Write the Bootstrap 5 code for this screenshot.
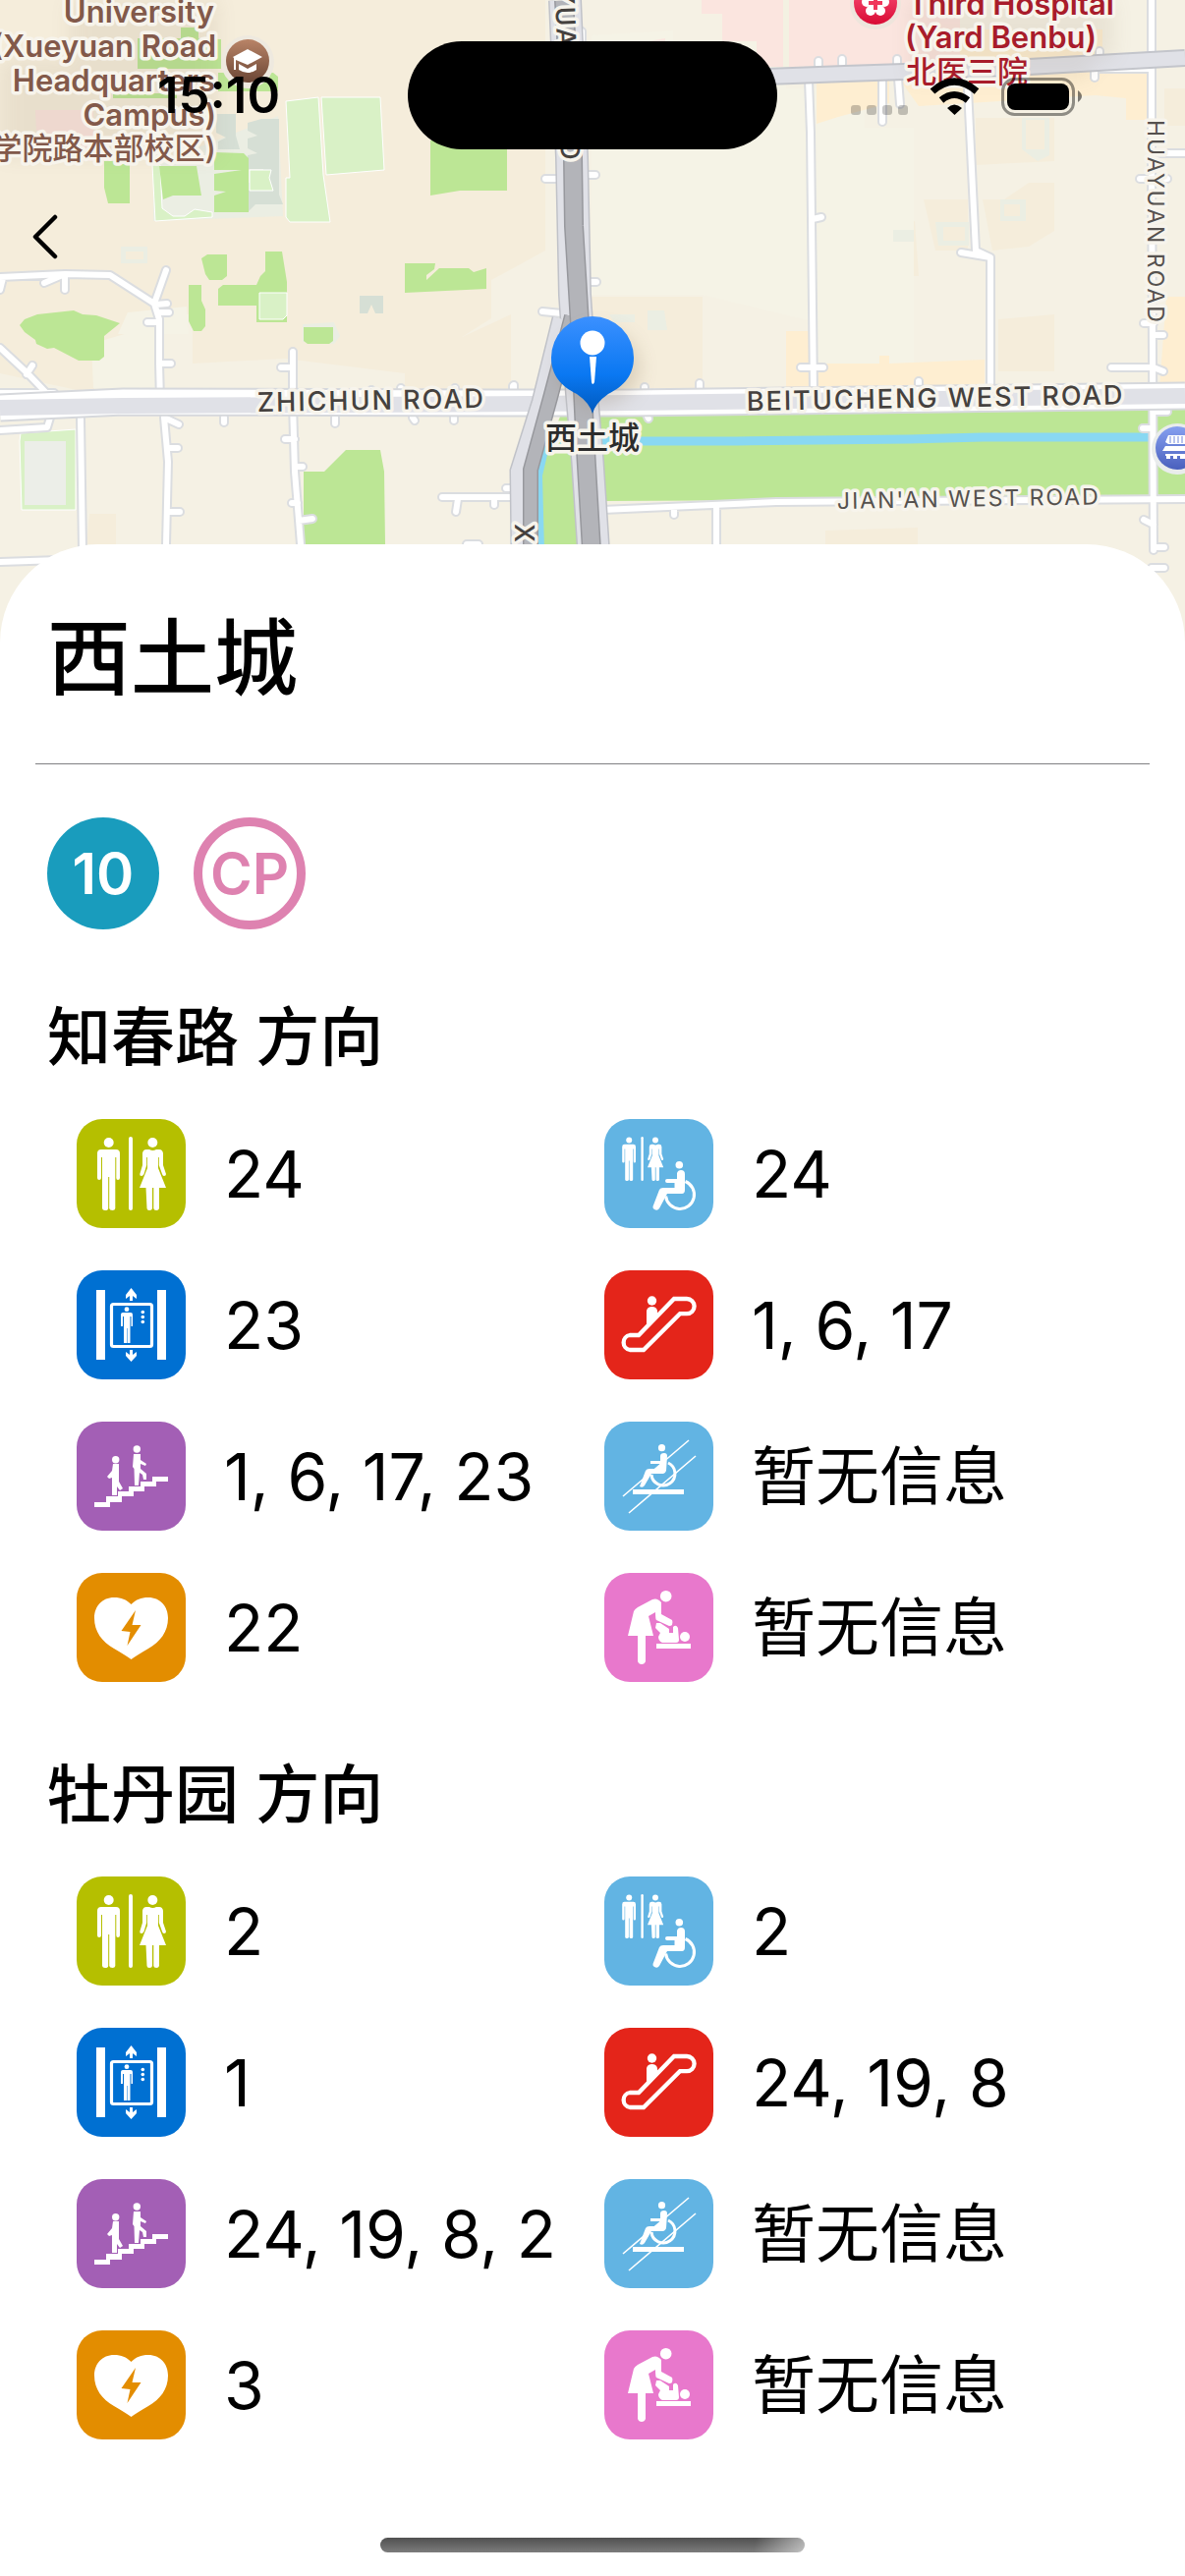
<!DOCTYPE html>
<html lang="zh-CN">
<head>
<meta charset="utf-8">
<meta name="viewport" content="width=device-width, initial-scale=1">
<title>西土城</title>
<link href="https://cdn.jsdelivr.net/npm/bootstrap@5.3.0/dist/css/bootstrap.min.css" rel="stylesheet">
<style>
  body { font-family: Inter, "Noto Sans CJK SC", sans-serif; color: #000; background: #fff; }
  .map-area { height: 690px; background: #f5f1e4; overflow: hidden; }
  .map-area svg { display: block; width: 100%; height: 690px; }
  .status-bar { height: 194px; z-index: 3; }
  .clock { font-size: 51px; font-weight: 600; line-height: 60px; }
  .clock time { margin-left: 30px; }
  .indicators { margin-right: 32px; }
  .island { width: 376px; height: 110px; border-radius: 55px; background: #000; }
  .back-btn { top: 194px; left: 0; width: 92px; height: 94px; z-index: 3; }
  .sheet { margin-top: -136px; border-radius: 100px 100px 0 0; background: #fff; padding: 57px 36px 24px; z-index: 2; }
  .station { font-size: 85px; font-weight: 500; line-height: 120px; padding-left: 12px; margin: 0 0 46px; }
  .rule { height: 1px; background: #808083; margin: 0 0 54px; }
  .lines { gap: 35px; padding-left: 12px; margin-bottom: 65px; }
  .line-dot { width: 114px; height: 114px; font-size: 58px; font-weight: 600; line-height: 1; }
  .line-10 { background: #199cbd; color: #fff; }
  .line-cp { border: 9px solid #de82b0; color: #de82b0; }
  .direction { font-size: 65px; font-weight: 500; line-height: 90px; padding-left: 12px; margin: 0 0 38px; }
  .facilities { padding: 0 42px; margin-bottom: 70px; }
  .facilities .row { --bs-gutter-y: 43px; }
  .facility { gap: 39px; height: 111px; font-size: 66px; line-height: 100px; white-space: nowrap; }
  .facility .none { font-size: 65px; }
  .tile { width: 111px; height: 111px; border-radius: 26px; flex: none; fill: #fff; }
  .tile-wc { background: #b5bf00; }
  .tile-lift { background: #0070d2; }
  .tile-stairs { background: #a35fb5; }
  .tile-aed { background: #e38d00; }
  .tile-access { background: #62b4e3; }
  .tile-escalator { background: #e4251a; }
  .tile-baby { background: #e878cc; }
  .home-bar { width: 432px; height: 15px; border-radius: 8px; background: linear-gradient(100deg, transparent 88%, #ffffff88), linear-gradient(#505050, #7c7c7c); margin-top: 100px; }
  .park { fill: #bce695; }
  .field { fill: #d9f1c6; stroke: #fff; stroke-width: 1; }
  .block { fill: #f5eddb; }
  .sand { fill: #feeed1; }
  .clinic { fill: #fbe5df; }
  .bldg { fill: #d6dfd5; }
  .pale { fill: #ebeee3; }
  .street-edge { fill: none; stroke: #dbdde0; stroke-width: 10; stroke-linecap: round; stroke-linejoin: round; }
  .street { fill: none; stroke: #fff; stroke-width: 6; stroke-linecap: round; stroke-linejoin: round; }
  .map-text { paint-order: stroke; stroke: #f7f4ec; stroke-width: 7px; stroke-linejoin: round; font-family: Inter, "Noto Sans CJK SC", sans-serif; }
  .poi { font-size: 31px; font-weight: 600; }
  .poi .zh { font-weight: 500; }
  .school { fill: #82594a; text-anchor: end; }
  .hospital { fill: #a81c2b; }
  .road-name { font-size: 27px; font-weight: 500; fill: #45413e; letter-spacing: 2px; }
  .road-minor { font-size: 23px; font-weight: 400; fill: #55514e; letter-spacing: 2px; }
  .pin-name { font-size: 32px; font-weight: 500; fill: #2c2c2c; text-anchor: middle; }
</style>
</head>
<body>
<svg width="0" height="0" class="position-absolute" aria-hidden="true">
  <defs>
    <g id="pair">
      <circle cx="32.700" cy="24" r="5"/>
      <path d="M25 31H40Q44 31 44 35V60Q44 62 42 62Q40.300 62 40.300 60V39H39.300V91Q39 93 36.500 93Q33.500 93 33.200 91V59H32.200V91Q32 93 29 93Q26.300 93 26 91V39H25V60Q25 62 23 62Q21 62 21 60V35Q21 31 25 31Z"/>
      <rect x="53" y="18" width="4" height="75" rx="2"/>
      <circle cx="77.300" cy="24" r="5"/>
      <path d="M71 31H74Q77.500 33 81 31H84Q87.500 31 88 35V47L91 56Q91 58 89 58Q87.500 58 87 56L83.800 47V39H83V50L91 70H84V91Q83.500 93 81.200 93Q78.500 93 78.300 91V70H77V91Q76.800 93 74 93Q71.700 93 71.500 91L70.500 70H64L72 50V39H71.200V47L68.500 56Q67.500 58 66 58Q64 58 64.300 56L67 47V35Q67.500 31 71 31Z"/>
    </g>
    <symbol id="i-wc" viewBox="0 0 111 111"><use href="#pair"/></symbol>
    <symbol id="i-access" viewBox="0 0 111 111">
      <use href="#pair" transform="translate(5.600 7.200) scale(.6)"/>
      <circle cx="76.300" cy="46.700" r="3.800"/>
      <path d="M74 55Q75 52 78 52Q82 52 82 56V72Q82 76 79 76H64L56 91Q54 94 51 92Q49 91 49.500 89L56 72Q57 70 60 70H71.500V65H64Q62 65 62 63Q62 61 64 61H74Z"/>
      <path d="M82.500 63.500A14.500 14.500 0 1 1 62.600 78.500" fill="none" stroke="#fff" stroke-width="3"/>
    </symbol>
    <symbol id="i-lift" viewBox="0 0 111 111">
      <path d="M20 20h9v71h-9zM82 20h9v71h-9z"/>
      <rect x="35.500" y="34.500" width="41" height="43" rx="2" fill="none" stroke="#fff" stroke-width="3.200"/>
      <circle cx="51" cy="39.700" r="2.400"/>
      <path d="M47 43H55Q57 43 57 45V57H55.500V47H54.500V74H51.500V59H51V74H48V47H47V57H45V45Q45 43 47 43Z"/>
      <circle cx="67.300" cy="42.500" r="1.800"/><circle cx="67.300" cy="47.500" r="1.800"/><circle cx="67.300" cy="52.500" r="1.800"/>
      <path d="M55.500 18L61 25V29L57 26V31H54V26L50 29V25ZM55.500 93L61 87V83L57 86V81H54V86L50 83V87Z"/>
    </symbol>
    <symbol id="i-escalator" viewBox="0 0 111 111">
      <circle cx="48.500" cy="31" r="4.700"/>
      <path d="M43 41Q44 37 48.500 37Q53 37 54 41V45L43 56Z"/>
      <path d="M71 29H84A7.600 7.600 0 0 1 84 44.200H77L40 81H26A7.600 7.600 0 0 1 26 66H35Z" fill="none" stroke="#fff" stroke-width="4.300"/>
    </symbol>
    <symbol id="i-stairs" viewBox="0 0 111 111">
      <path d="M18 82h16v5h-16zM30 76h16v6h-16zM42 71h16v5h-16zM53 66h16v5h-16zM65 61h16v5h-16zM77 56h16v5h-16z"/>
      <circle cx="39.700" cy="38.700" r="3.700"/>
      <path d="M37 43H43V61L47 68L44 70L41 66V75H36V57L33 58L31 56L36 50Z"/>
      <circle cx="61.300" cy="28" r="3.700"/>
      <path d="M58 33H65V39L71 43L70 45L65 43V48L71 53V59H68L67 54L64 52L63 65H59L58.500 48L57 46Z"/>
    </symbol>
    <symbol id="i-platform" viewBox="0 0 111 111">
      <circle cx="58.500" cy="26.700" r="3.600"/>
      <path d="M57 35Q57 32 61 32Q64 32 64 35L63 50Q62 53 60 53H48L41 65Q39 68 36 66L42 50Q43 48 46 48H52L57 43H47V40H57Z"/>
      <path d="M65 42A12 12 0 1 1 48 54" fill="none" stroke="#fff" stroke-width="3"/>
      <path d="M29 69h52v5h-52z"/>
      <path d="M19 76L86 19M25 93L93 35" stroke="#fff" stroke-width="1.600"/>
    </symbol>
    <symbol id="i-aed" viewBox="0 0 111 111">
      <path fill-rule="evenodd" d="M55.500 32C50 27 46 25 38 25C26 25 18 34 18 46C18 60 26 70 38 77Q50 84 55.500 88Q61 84 73 77C85 70 93 60 93 46C93 34 85 25 73 25C65 25 61 27 55.500 32ZM60 38L45.500 59L54.500 60L51.500 74L65.500 53H56.500Z"/>
    </symbol>
    <symbol id="i-baby" viewBox="0 0 111 111">
      <circle cx="62.700" cy="23.700" r="5.800"/>
      <path d="M30 39Q31 37 34 35L49 27Q54 25 58 30V42L69 48Q70 50 69 53Q68 54 66 54L53 48Q52 47 52 40L45 44L50 64H42V90Q41 93 38 93Q35 93 34 90V64H24Z"/>
      <path d="M53 51L57 51L66 57V61H70V55Q73 52 75 56L76 68Q76 71 73 71H59Q55 69 55 65L57 61L52 56Z"/>
      <circle cx="82" cy="65" r="5"/>
      <path d="M53 72h35v5h-35z"/>
    </symbol>
    <linearGradient id="pinFill" x1="0" y1="0" x2="0" y2="1"><stop offset="0" stop-color="#3b90ff"/><stop offset=".6" stop-color="#0a78f2"/><stop offset="1" stop-color="#0059bd"/></linearGradient>
    <linearGradient id="schoolFill" x1="0" y1="0" x2="0" y2="1"><stop offset="0" stop-color="#b98467"/><stop offset="1" stop-color="#6b4635"/></linearGradient>
    <linearGradient id="hospFill" x1="0" y1="0" x2="0" y2="1"><stop offset="0" stop-color="#ff5a80"/><stop offset="1" stop-color="#d80b34"/></linearGradient>
    <linearGradient id="templeFill" x1="0" y1="0" x2="0" y2="1"><stop offset="0" stop-color="#86a0f0"/><stop offset="1" stop-color="#4a60bd"/></linearGradient>
    <filter id="soft" x="-30%" y="-30%" width="160%" height="160%"><feGaussianBlur stdDeviation="10"/></filter>
  </defs>
</svg>

<main class="position-relative">
  <header class="status-bar position-absolute top-0 start-0 w-100 d-flex justify-content-between align-items-center">
    <div class="col text-center clock"><time>15:10</time></div>
    <div class="island flex-shrink-0"></div>
    <div class="col d-flex justify-content-center">
      <svg class="indicators" width="240" height="44" viewBox="862 74 240 44" aria-label="信号与电量">
        <g fill="#000" fill-opacity=".22"><rect x="865" y="106" width="10" height="10" rx="3"/><rect x="881" y="106" width="10" height="10" rx="3"/><rect x="897" y="106" width="10" height="10" rx="3"/><rect x="913" y="106" width="10" height="10" rx="3"/></g>
        <path d="M948 92Q970 72 993 92M957 101Q970 90 984 101" fill="none" stroke="#000" stroke-width="7"/>
        <path d="M963 109Q970 102 978 109L970.500 116Z"/>
        <rect x="1019.500" y="79.500" width="72" height="36" rx="12" fill="none" stroke="#000" stroke-opacity=".42" stroke-width="3"/>
        <rect x="1024" y="84" width="63" height="27" rx="8"/>
        <path d="M1096 91Q1104 97 1096 103Z" fill-opacity=".5"/>
      </svg>
    </div>
  </header>
  <button type="button" class="back-btn btn border-0 p-0 position-absolute d-flex align-items-center justify-content-center" aria-label="返回">
    <svg width="28" height="46" viewBox="0 0 28 46" fill="none" stroke="#000" stroke-width="4.500" stroke-linecap="round" stroke-linejoin="round"><path d="M24 3L4 23L24 43"/></svg>
  </button>

  <section class="map-area" aria-label="地图">
    <svg viewBox="0 0 1206 690" preserveAspectRatio="xMidYMin slice">
      <rect width="1206" height="690" fill="#f5f1e4"/>
      <path class="block" d="M0 0H555V255L500 285V324L412 380L290 365L196 370V320H0ZM600 302H715V395H600ZM0 320H160L92 400L0 380ZM887 230L931 225L935 281H887ZM940 203H985V255H952ZM1000 203H1022L1047 186H1073V235L1047 251L1010 255ZM993 120H1073V164L993 168ZM91 523H118V554H88ZM1016 325L1073 320V378H1016ZM840 540L934 537V554H840ZM1185 90H1206V128H1185ZM412 370L520 320V400H412Z"/>
      <path fill="#f5f3e6" d="M602 36L685 31V42H800V90H880V340L715 300H602ZM828 130H930V390H828ZM93 350L160 330V395H95ZM130 318L190 312L192 340H120Z"/>
      <path class="sand" d="M831 80H905V105L853 119L831 126ZM915 80L985 78L1172 70V122H1146V100L1115 97L935 108ZM1187 302H1206V395H1180ZM800 337H823V395H800ZM835 370H895V362H905V370L1002 366V395H830ZM930 30H1122V60H980Z"/>
      <path class="clinic" d="M714 0H797V68H770V42H735V14H714ZM803 0H977V65L803 68ZM36 112H95V164H70V140L37 133ZM660 42L677 39V44H650Z"/>
      <path d="M797 0V68H803V0" fill="#f3f1e2"/>
      <path class="pale" d="M156 168L283 118L288 220L156 225Z"/>
      <path class="bldg" d="M220 116H240V138L244 152H222V144L230 140L220 135ZM252 125L266 121H284V198L288 208H260L252 216V186H268V172H252V158L262 156L252 151V141L262 138L252 133ZM366 319V301H390V319H382L378 310L374 319Z"/>
      <path class="pale" d="M123 251H150V268H123ZM620 320H646V328H625ZM659 316H676L679 336H659ZM909 234H930V246H909ZM1040 120H1068V158L1056 164L1040 152ZM1018 203H1044V225H1018ZM952 226H986V250H955ZM308 336L308 330L340 328L346 342L340 350L308 348Z"/>
      <path class="block" d="M1044 122H1063V152H1044ZM1022 208H1038V220H1022ZM960 231H982V245H960ZM128 256H146V264H128Z"/>
      <path class="field" d="M291 103L324 99L329 178L336 226H295L291 221V181H295ZM327 99H387L391 173L332 178ZM155 168L158 225L216 221V216L198 213L188 220H176L165 212L163 168ZM254 173H276L274 181L278 194H254Z"/>
      <path class="park" d="M106 164H132V207H110L106 191ZM162 169H200L205 199L176 199L166 203ZM218 155L248 156L253 161V216H218V199L230 195L218 194V177L246 173H218ZM140 39H200V70H140ZM184 28H202V42H184ZM200 39L225 40V70H200ZM222 74H278L283 78V93H222ZM115 95H180V100H115ZM205 263L211 259H231V281L226 285H213L209 279ZM192 290H205V306L209 315V332L205 337H197L192 327ZM222 294L227 290H261L265 281L270 276V256H287L292 287V328H261V311H222ZM438 143H516V194H468L438 199ZM412 268H443L442 274L434 280V285L447 273H477L482 277L495 273V294L412 298ZM309 333H339V347L335 350H313L309 347ZM20 331L25 325L38 320L75 316L84 320L98 321L122 329L106 342V363L101 367H80L55 354L48 355L37 350L36 346L25 338ZM309 480H330L352 458H387L391 480L392 554H309Z"/>
      <path class="field" d="M264 298H292V321L288 325H264ZM21 441L77 437V519H22L20 449Z"/>
      <rect x="25" y="449" width="42" height="65" fill="#eceee8"/>
      <path class="park" d="M548 554V480L570 424L602 423L830 415L1206 411V504L1165 505L790 509L613 510V554Z"/>
      <path d="M556 454L549 484L551 560" fill="none" stroke="#89d8f2" stroke-width="6"/>
      <path d="M570 449H750L925 447L1000 445H1170" fill="none" stroke="#89d8f2" stroke-width="9"/>

      <defs>
        <path id="streets-west" d="M0 282L66 279L112 280L157 309L162 325V370L163 408M66 279V295M66 279L45 288M3 283L0 295M157 309L169 275M159 310L170 309M160 318H172M162 328H150M162 370H174M0 400H55M0 354L28 380L52 405M27 381L33 372M0 438L48 435L51 425M298 358V410L300 480L306 554M298 374H286M300 447H290M302 475H308M304 530L318 528M303 512L297 512M82 426L84 560M167 425L171 470L169 554M171 456H181M170 521H183M167 425L182 432M125 400V411M229 402V412M228 425V430M341 425V431M420 425L422 428M462 420V428M522 393V410M463 395V408M408 395V408M378 397V408M540 420V480L537 490M450 506H530M466 508L464 521M503 507V514M515 497H530M0 572L60 570M475 554L487 554"/>
        <path id="streets-east" d="M823 82L825 135L828 400M827 223L836 221M815 374H838M985 90L993 255L1008 262V400M1008 262L978 257M898 80V124M914 80L916 106M1172 0V60M1172 70V160L1174 560M1114 70H1172M1114 72V79M1172 156H1206M1170 182H1160M1174 182L1188 182M1174 329H1164M1174 341H1184M1131 374H1174L1184 378M1174 419H1188M1173 436H1163M1174 534L1164 529M1174 557H1185M1172 578H1185M613 519L790 511L1206 508M729 516V554M686 518V524M591 178H606M555 182H570M600 287H607M552 317L572 319M592 32V42M523 392V408M656 394V408M712 390V405M935 388V400M657 420L660 426M1119 52V60M857 65V60M833 66V62M913 65V60"/>
      </defs>
      <g class="street-edge"><use href="#streets-west"/><use href="#streets-east"/></g>
      <g class="street"><use href="#streets-west"/><use href="#streets-east"/></g>

      <!-- main roads: east-west pair, then the ring road and its branch -->
      <path d="M780 78L860 75L1010 70L1206 59" fill="none" stroke="#c3c5cb" stroke-width="18"/>
      <path d="M780 78L860 75L1010 70L1206 59" fill="none" stroke="#e0e1e7" stroke-width="14"/>
      <path d="M0 415L125 409L540 410L640 410L1206 403" fill="none" stroke="#d6d8dc" stroke-width="29"/>
      <path d="M0 415L125 409L540 410L640 410L1206 403" fill="none" stroke="#fff" stroke-width="25"/>
      <path d="M0 415L125 413L540 411L640 410L1206 403" fill="none" stroke="#e0e1e7" stroke-width="16"/>
      <path d="M575 0L582 160L585 300L592 400L598 470L604 560" fill="none" stroke="#c0c2c8" stroke-width="34"/>
      <path d="M575 0L582 160L585 300L592 400L598 470L604 560" fill="none" stroke="#e0e1e7" stroke-width="31"/>
      <path d="M573 325L552 410L530 480L531 560" fill="none" stroke="#c0c2c8" stroke-width="23"/>
      <path d="M573 325L552 410L530 480L531 560" fill="none" stroke="#e0e1e7" stroke-width="20"/>
      <path d="M582 322L560 405L540 478V560" fill="none" stroke="#97989d" stroke-width="16"/>
      <path d="M582 322L560 405L540 478V560" fill="none" stroke="#b3b4b9" stroke-width="13"/>
      <path d="M574 0L583 160L584 230L590 330L595 440L602 560" fill="none" stroke="#97989d" stroke-width="20"/>
      <path d="M574 0L583 160L584 230L590 330L595 440L602 560" fill="none" stroke="#b3b4b9" stroke-width="17"/>

      <path d="M70 0H222V160H0V60H70ZM925 0H1134V60H1110V80H925Z" fill="#806a50" opacity=".1" filter="url(#soft)"/>
      <circle cx="252" cy="63" r="27" fill="#eee9df"/><circle cx="252" cy="62" r="22" fill="url(#schoolFill)"/>
      <path d="M252 50L267 58L252 66L240 61V71H238V59L237 58ZM243 65L252 70L261 65V71Q252 77 243 71Z" fill="#fff"/>
      <g class="map-text poi school">
        <text x="218" y="23">University</text><text x="220" y="58">(Xueyuan Road</text><text x="219" y="93">Headquarters</text><text x="220" y="128">Campus)</text><text class="zh" x="220" y="162">学院路本部校区)</text>
      </g>
      <g class="map-text poi hospital">
        <text x="924" y="15">Third Hospital</text><text x="921" y="49">(Yard Benbu)</text><text class="zh" x="922" y="84">北医三院</text>
      </g>
      <circle cx="891" cy="4" r="26" fill="#eee5dc"/><circle cx="891" cy="3" r="22" fill="url(#hospFill)"/>
      <g fill="#fff"><circle cx="891" cy="-5" r="6"/><circle cx="882" cy="2" r="5"/><circle cx="900" cy="2" r="5"/><circle cx="886" cy="11" r="5"/><circle cx="896" cy="11" r="5"/><circle cx="891" cy="4" r="8"/></g>
      <path d="M889 -4h4v5h5v4h-5v5h-4v-5h-5v-4h5z" fill="#f0375c"/>
      <text class="map-text road-name" transform="translate(262 419) rotate(-1)">ZHICHUN ROAD</text>
      <text class="map-text road-name" transform="translate(760 418) rotate(-1)">BEITUCHENG WEST ROAD</text>
      <text class="map-text road-minor" transform="translate(852 518) rotate(-1)">JIAN'AN WEST ROAD</text>
      <text class="map-text road-minor" transform="translate(1168 122) rotate(90)">HUAYUAN ROAD</text>
      <text class="map-text road-name" text-anchor="end" transform="translate(571 165) rotate(88)">XUEYUAN ROAD</text>
      <text class="map-text road-name" transform="translate(524 533) rotate(90)">X</text>

      <circle cx="1198" cy="457" r="26" fill="#e9ecec"/><circle cx="1198" cy="456" r="22" fill="url(#templeFill)"/>
      <path d="M1189 443H1206V452H1189L1186 450ZM1186 454H1206V459H1183ZM1186 462H1206V464H1186ZM1187 464H1191V467H1187ZM1194 464H1198V467H1194ZM1201 464H1206V467H1201Z" fill="#fff"/>
      <path d="M1191 444V451M1195 444V451M1199 444V451M1203 444V451" stroke="#7389dc"/>
      <ellipse cx="610" cy="374" rx="40" ry="38" fill="#806a50" opacity=".25" filter="url(#soft)"/>
      <path d="M603 421Q600 410 587 401C571 393 561 382 561 364A42 42 0 0 1 645 364C645 382 635 393 619 401Q606 410 603 421Z" fill="url(#pinFill)"/>
      <circle cx="603" cy="349" r="12.500" fill="#fff"/><path d="M600 363H607L605 389Q603 393 602 389Z" fill="#fff"/>
      <text class="map-text pin-name" x="603" y="457">西土城</text>
    </svg>
  </section>

  <section class="sheet position-relative">
    <h1 class="station">西土城</h1>
    <div class="rule"></div>
    <div class="lines d-flex">
      <span class="line-dot line-10 rounded-circle d-flex align-items-center justify-content-center">10</span>
      <span class="line-dot line-cp rounded-circle d-flex align-items-center justify-content-center">CP</span>
    </div>

    <h2 class="direction">知春路 方向</h2>
    <div class="facilities">
      <div class="row">
        <div class="col-6"><div class="facility d-flex align-items-center"><svg class="tile tile-wc"><use href="#i-wc"/></svg><span>24</span></div></div>
        <div class="col-6"><div class="facility d-flex align-items-center"><svg class="tile tile-access"><use href="#i-access"/></svg><span>24</span></div></div>
        <div class="col-6"><div class="facility d-flex align-items-center"><svg class="tile tile-lift"><use href="#i-lift"/></svg><span>23</span></div></div>
        <div class="col-6"><div class="facility d-flex align-items-center"><svg class="tile tile-escalator"><use href="#i-escalator"/></svg><span>1, 6, 17</span></div></div>
        <div class="col-6"><div class="facility d-flex align-items-center"><svg class="tile tile-stairs"><use href="#i-stairs"/></svg><span>1, 6, 17, 23</span></div></div>
        <div class="col-6"><div class="facility d-flex align-items-center"><svg class="tile tile-access"><use href="#i-platform"/></svg><span class="none">暂无信息</span></div></div>
        <div class="col-6"><div class="facility d-flex align-items-center"><svg class="tile tile-aed"><use href="#i-aed"/></svg><span>22</span></div></div>
        <div class="col-6"><div class="facility d-flex align-items-center"><svg class="tile tile-baby"><use href="#i-baby"/></svg><span class="none">暂无信息</span></div></div>
      </div>
    </div>

    <h2 class="direction">牡丹园 方向</h2>
    <div class="facilities mb-0">
      <div class="row">
        <div class="col-6"><div class="facility d-flex align-items-center"><svg class="tile tile-wc"><use href="#i-wc"/></svg><span>2</span></div></div>
        <div class="col-6"><div class="facility d-flex align-items-center"><svg class="tile tile-access"><use href="#i-access"/></svg><span>2</span></div></div>
        <div class="col-6"><div class="facility d-flex align-items-center"><svg class="tile tile-lift"><use href="#i-lift"/></svg><span>1</span></div></div>
        <div class="col-6"><div class="facility d-flex align-items-center"><svg class="tile tile-escalator"><use href="#i-escalator"/></svg><span>24, 19, 8</span></div></div>
        <div class="col-6"><div class="facility d-flex align-items-center"><svg class="tile tile-stairs"><use href="#i-stairs"/></svg><span>24, 19, 8, 2</span></div></div>
        <div class="col-6"><div class="facility d-flex align-items-center"><svg class="tile tile-access"><use href="#i-platform"/></svg><span class="none">暂无信息</span></div></div>
        <div class="col-6"><div class="facility d-flex align-items-center"><svg class="tile tile-aed"><use href="#i-aed"/></svg><span>3</span></div></div>
        <div class="col-6"><div class="facility d-flex align-items-center"><svg class="tile tile-baby"><use href="#i-baby"/></svg><span class="none">暂无信息</span></div></div>
      </div>
    </div>
    <div class="home-bar mx-auto"></div>
  </section>
</main>
<script src="https://cdn.jsdelivr.net/npm/bootstrap@5.3.0/dist/js/bootstrap.bundle.min.js"></script>
</body>
</html>
